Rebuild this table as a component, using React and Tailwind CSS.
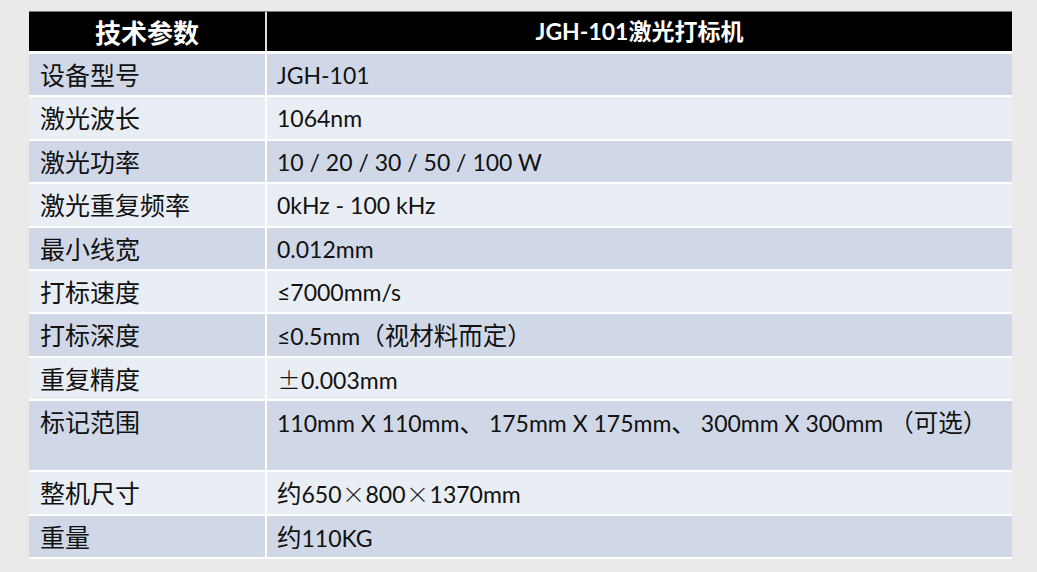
import React from 'react';

// full-width symbol, the way the CJK font sets it
const W = ({ children }) => (
  <span className="inline-block w-[24px] text-center font-['Noto_Sans_CJK_SC',sans-serif] font-light">
    {children}
  </span>
);

// chinese run inside a value, a bit larger than the latin text
const C = ({ children }) => (
  <span className="text-[24.5px] font-['Noto_Sans_CJK_SC',sans-serif]">{children}</span>
);

const Comma = () => (
  <span className="text-[24.5px] mr-[5px] font-['Noto_Sans_CJK_SC',sans-serif]">、</span>
);

const rows = [
  { label: '设备型号', value: 'JGH-101' },
  { label: '激光波长', value: '1064nm' },
  { label: '激光功率', value: '10 / 20 / 30 / 50 / 100 W' },
  { label: '激光重复频率', value: '0kHz - 100 kHz' },
  { label: '最小线宽', value: '0.012mm' },
  { label: '打标速度', value: '≤7000mm/s' },
  { label: '打标深度', value: <>≤0.5mm<C>（视材料而定）</C></> },
  { label: '重复精度', value: <><W>±</W>0.003mm</> },
  {
    label: '标记范围',
    value: <>110mm X 110mm<Comma />175mm X 175mm<Comma />300mm X 300mm <C>（可选）</C></>,
    tall: true,
  },
  { label: '整机尺寸', value: <><C>约</C>650<W>×</W>800<W>×</W>1370mm</> },
  { label: '重量', value: <><C>约</C>110KG</> },
];

const App = () => {
  return (
    <div className="w-[1037px] h-[572px] bg-[#eaeaea] pt-[11px] pl-[29px] overflow-hidden">
      <div className="w-[983px] flex flex-col">
        <div className="flex h-[40px] bg-black border-t border-[#777] text-white font-bold">
          <div className="w-[236px] flex items-center justify-center text-[26px] font-['Noto_Sans_CJK_SC',sans-serif]">
            技术参数
          </div>
          <div className="w-[2px] bg-[#ddd]" />
          <div className="flex-1 flex items-center justify-center text-[23px] font-['Lato','Noto_Sans_CJK_SC',sans-serif]">
            JGH-101激光打标机
          </div>
        </div>
        <div className="h-[3px] bg-white" />
        {rows.map((row, i) => (
          <div
            key={row.label}
            className={`flex border-b-2 border-white text-[#111] ${
              row.tall ? 'h-[71px]' : 'h-[43.4px]'
            } ${i % 2 === 0 ? 'bg-[#d0d8e8]' : 'bg-[#e9edf4]'}`}
          >
            <div className="w-[236px] pl-[11px] pt-[5px] text-[25px] leading-[30px] font-['Noto_Sans_CJK_SC',sans-serif]">
              {row.label}
            </div>
            <div className="w-[2px] bg-white" />
            <div className="flex-1 pl-[10px] pt-[6px] text-[23px] leading-[30px] font-['Lato','Noto_Sans_CJK_SC',sans-serif] whitespace-nowrap">
              {row.value}
            </div>
          </div>
        ))}
      </div>
    </div>
  );
};

export default App;
